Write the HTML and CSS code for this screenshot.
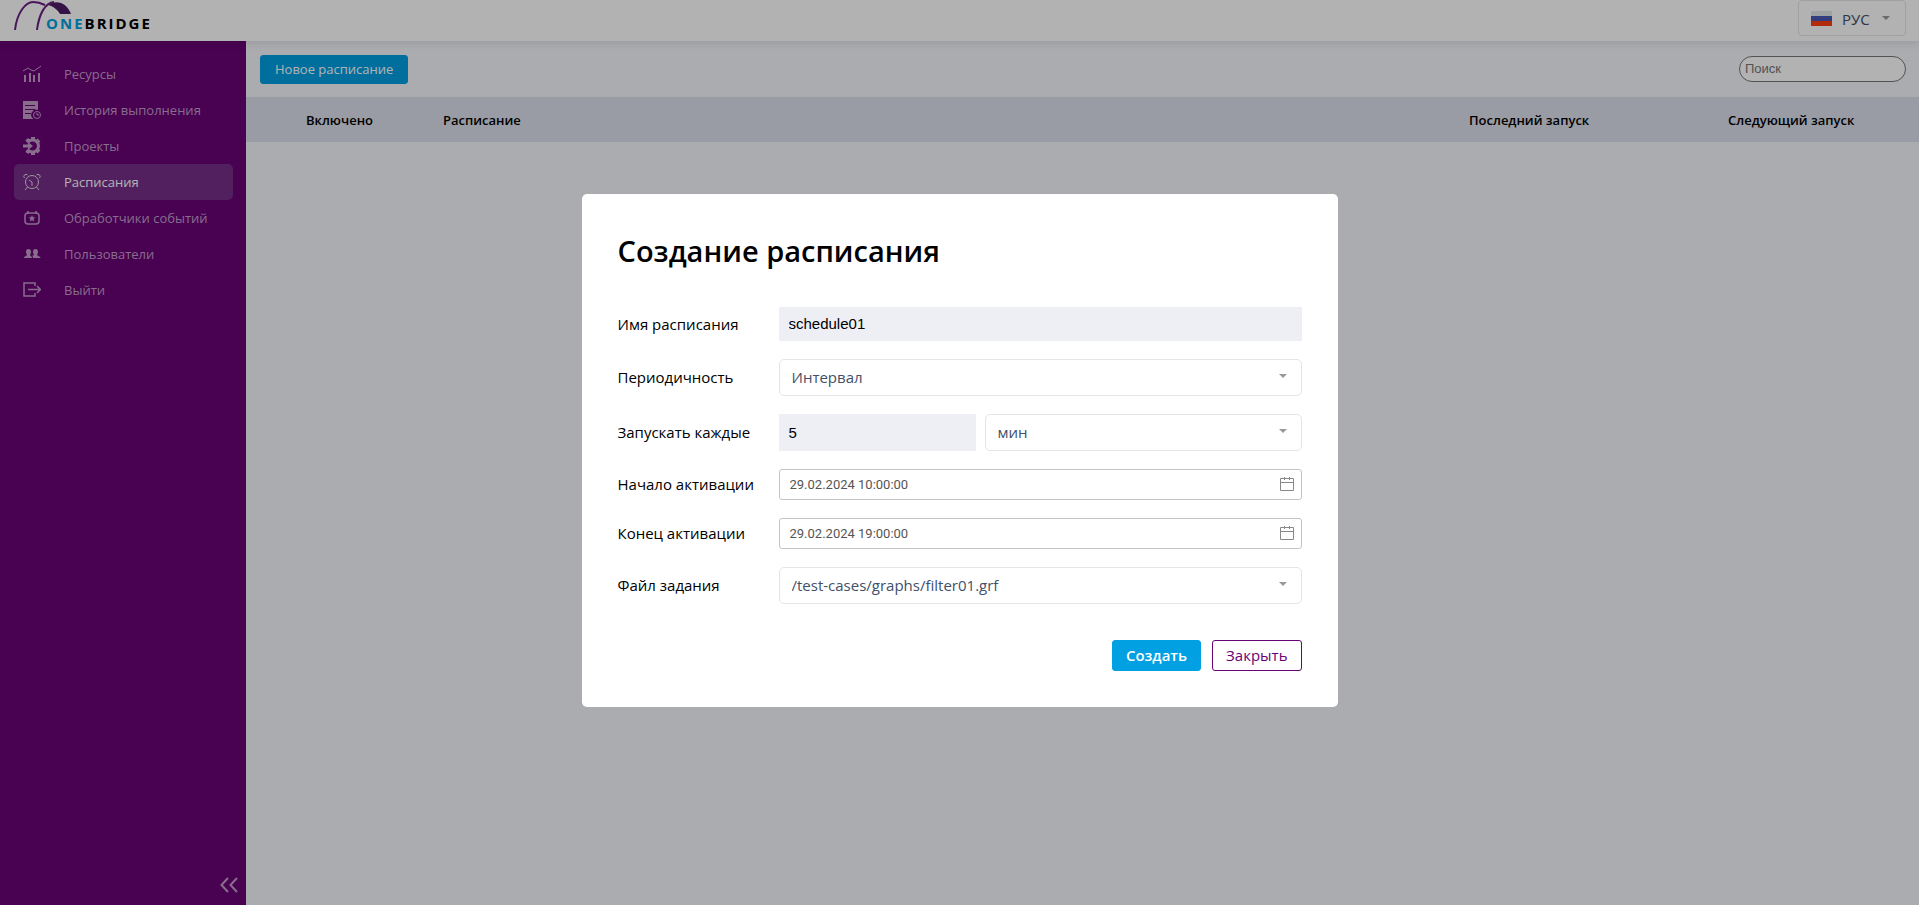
FILE: index.html
```html
<!DOCTYPE html>
<html lang="ru">
<head>
  <meta charset="utf-8">
  <title>OneBridge - Расписания</title>
  <link rel="stylesheet" href="styles.css">
</head>
<body>
  <header class="header">
    <a href="#" class="logo" aria-label="OneBridge">
      <svg width="150" height="40" viewBox="0 0 150 40">
        <path d="M1 30C3 12 12 2 19 2c5 0 8 1 12 3" fill="none" stroke="#6b2080" stroke-width="2"/>
        <path d="M23 30C25 14 31 3 40 2" fill="none" stroke="#6b2080" stroke-width="2"/>
        <path d="M34 5C43-1 53 3 57 14H46C44 10 39 6 34 5z" fill="#4f1c63"/>
        <text x="32" y="29" class="logo-text"><tspan fill="#00a0e3">ONE</tspan><tspan>BRIDGE</tspan></text>
      </svg>
    </a>
    <div class="lang">
      <svg class="flag" width="21" height="15" viewBox="0 0 21 15">
        <rect width="21" height="5" fill="#e4e8ea"/>
        <rect y="5" width="21" height="5" fill="#4a58b8"/>
        <rect y="10" width="21" height="5" fill="#ff4010"/>
      </svg>
      <select class="lang-select" aria-label="Язык">
        <option>РУС</option>
        <option>ENG</option>
      </select>
    </div>
  </header>

  <div class="page">
    <nav class="sidebar">
      <ul class="menu">
        <li><a href="#">
          <svg width="18" height="18" viewBox="0 0 18 18"><path d="M0 6l5-3 3 2 3 1 7-5" fill="none" stroke="currentColor"/><path d="M2 10v7M7 8v9M11 10v7M16 8v9" stroke="currentColor" stroke-width="2"/></svg>
          Ресурсы
        </a></li>
        <li><a href="#">
          <svg width="18" height="18" viewBox="0 0 18 18"><path fill-rule="evenodd" d="M0 0h15v9a5 5 0 0 0-5 8.500v.5H0zM2 4v1h10V4zM2 8v1h10V8zM2 12v1h6v-1z" fill="currentColor"/><circle cx="14" cy="14" r="3.500" fill="none" stroke="currentColor"/><path d="M14 12v2h2" fill="none" stroke="currentColor"/></svg>
          История выполнения
        </a></li>
        <li><a href="#">
          <svg width="18" height="18" viewBox="0 0 18 18"><path d="M5 5A6 6 0 1 1 5 13" fill="none" stroke="currentColor" stroke-width="3"/><path d="M10 0v3M10 15v3M16 3l-2 2M16 15l-2-2M4 2l2 3M4 16l2-3" stroke="currentColor" stroke-width="4"/><path d="M0 7.500h5V5l5 4-5 4v-2.500H0z" fill="currentColor"/></svg>
          Проекты
        </a></li>
        <li><a href="#" class="active">
          <svg width="18" height="18" viewBox="0 0 18 18" fill="none" stroke="currentColor"><circle cx="9" cy="9" r="6.500"/><path d="M1.500 5a2 2 0 1 1 3-3M16.500 5a2 2 0 1 0-3-3M4.500 14L2 17M13.500 14l2.500 3M6 7l3 2v4"/></svg>
          Расписания
        </a></li>
        <li><a href="#">
          <svg width="18" height="18" viewBox="0 0 18 18"><rect x="2" y="4" width="14" height="11" rx="3" fill="none" stroke="currentColor" stroke-width="1.500"/><path d="M5 2v3M13 2v3" stroke="currentColor" stroke-width="1.500"/><path d="M9 6l1 2.300 2.500.2-1.900 1.600.6 2.400L9 11.200l-2.200 1.300.6-2.400-1.900-1.600L8 8.300z" fill="currentColor"/></svg>
          Обработчики событий
        </a></li>
        <li><a href="#">
          <svg width="18" height="18" viewBox="0 0 18 18" fill="currentColor"><path d="M1 13c0-2 3-2 3-3-2-3-1-6 1.500-6S9 7 7 10c0 1 2 1 2 3z"/><path d="M10 13c0-1-.5-2-1-2.500 1 0 2 0 2-.5-2-3-1-6 1.500-6S16 7 14 10c0 1 3.500 1 3.500 3z"/></svg>
          Пользователи
        </a></li>
        <li><a href="#">
          <svg width="18" height="18" viewBox="0 0 18 18" fill="none" stroke="currentColor" stroke-width="1.500"><path d="M12 5V2H1v13h11v-3M5 8.500h12M14 5l3.500 3.500L14 12"/></svg>
          Выйти
        </a></li>
      </ul>
      <button type="button" class="collapse" aria-label="Свернуть меню">
        <svg width="18" height="16" viewBox="0 0 18 16" fill="none" stroke="currentColor" stroke-width="2"><path d="M8 1L1.500 8 8 15M17 1l-6.500 7 6.500 7"/></svg>
      </button>
    </nav>

    <main class="content">
      <div class="toolbar">
        <button type="button" class="btn btn-new">Новое расписание</button>
        <input type="search" class="search" placeholder="Поиск" aria-label="Поиск">
      </div>
      <table class="schedules">
        <thead>
          <tr>
            <td class="col-check"></td>
            <th class="col-enabled">Включено</th>
            <th>Расписание</th>
            <th class="col-last">Последний запуск</th>
            <th class="col-next">Следующий запуск</th>
          </tr>
        </thead>
      </table>
    </main>
  </div>

  <div class="overlay">
    <form class="modal" role="dialog" aria-labelledby="modalTitle">
      <h1 id="modalTitle">Создание расписания</h1>

      <div class="row">
        <label for="name">Имя расписания</label>
        <input type="text" id="name" class="field" value="schedule01">
      </div>
      <div class="row">
        <label for="period">Периодичность</label>
        <div class="select">
          <select id="period"><option>Интервал</option></select>
        </div>
      </div>
      <div class="row">
        <label for="every">Запускать каждые</label>
        <div class="interval">
          <input type="text" id="every" class="field" value="5">
          <div class="select">
            <select aria-label="Единица времени"><option>мин</option></select>
          </div>
        </div>
      </div>
      <div class="row">
        <label for="start">Начало активации</label>
        <div class="date">
          <input type="text" id="start" value="29.02.2024 10:00:00">
          <svg width="14" height="14" viewBox="0 0 14 14" fill="none" stroke="#888"><path d="M.5 1.500h13v12H.5zM.5 5.500h13M4.500 0v3M9.500 0v3"/></svg>
        </div>
      </div>
      <div class="row">
        <label for="end">Конец активации</label>
        <div class="date">
          <input type="text" id="end" value="29.02.2024 19:00:00">
          <svg width="14" height="14" viewBox="0 0 14 14" fill="none" stroke="#888"><path d="M.5 1.500h13v12H.5zM.5 5.500h13M4.500 0v3M9.500 0v3"/></svg>
        </div>
      </div>
      <div class="row">
        <label for="file">Файл задания</label>
        <div class="select">
          <select id="file"><option>/test-cases/graphs/filter01.grf</option></select>
        </div>
      </div>

      <div class="actions">
        <button type="button" class="btn btn-create">Создать</button>
        <button type="button" class="btn btn-close">Закрыть</button>
      </div>
    </form>
  </div>
</body>
</html>
```
FILE: styles.css
```css
* {
  box-sizing: border-box;
}

body {
  margin: 0;
  min-height: 100vh;
  display: flex;
  flex-direction: column;
  font-family: "Open Sans", sans-serif;
  font-size: 13px;
  color: #000;
  background-color: #f4f6fb;
}

button,
select {
  font-family: inherit;
  cursor: pointer;
}

/* Header */
.header {
  position: relative;
  display: flex;
  justify-content: space-between;
  height: 41px;
  padding: 0 13px 0 14px;
  background-color: #fff;
  box-shadow: 0 0 10px rgba(0, 0, 0, 0.15);
}

.logo svg {
  display: block;
}

.logo-text {
  font-size: 15px;
  font-weight: 700;
  letter-spacing: 2px;
}

.lang {
  position: relative;
  display: flex;
  align-items: center;
  width: 108px;
  height: 36px;
  padding-left: 12px;
  border: 1px solid #e5e5e8;
  border-radius: 4px;
}

.lang-select {
  flex: 1;
  height: 34px;
  padding: 2px 10px 0;
  border: 0;
  background: none;
  appearance: none;
  font-size: 15px;
  color: #41506b;
}

.lang::after,
.select::after {
  content: "";
  position: absolute;
  top: 15px;
  right: 15px;
  border: 4px solid transparent;
  border-top-color: #999;
  border-bottom: 0;
  pointer-events: none;
}

/* Sidebar */
.page {
  flex: 1;
  display: flex;
}

.sidebar {
  width: 246px;
  display: flex;
  flex-direction: column;
  justify-content: space-between;
  align-items: flex-end;
  padding: 15px 13px 12px 14px;
  background-color: #670375;
}

.menu {
  width: 100%;
  margin: 0;
  padding: 0;
  list-style: none;
}

.menu a {
  display: flex;
  align-items: center;
  gap: 23px;
  height: 36px;
  padding-left: 9px;
  border-radius: 5px;
  color: #c39dca;
  text-decoration: none;
}

.menu a.active {
  color: #fff;
  background-color: #762e89;
}

.menu a.active svg {
  opacity: 0.8;
}

.collapse {
  padding: 0;
  margin-right: -5px;
  border: 0;
  background: none;
  color: #c39dca;
}

.collapse svg {
  display: block;
}

/* Content */
.content {
  flex: 1;
}

.toolbar {
  display: flex;
  justify-content: space-between;
  align-items: center;
  height: 56px;
  padding: 0 13px 0 14px;
}

.btn {
  padding: 0 14px;
  border: 1px solid #00a0e3;
  border-radius: 3px;
  background-color: #00a0e3;
  color: #fff;
}

.btn-new {
  height: 29px;
  font-size: 13px;
}

.search {
  width: 167px;
  height: 26px;
  padding: 0 5px 2px;
  border: 1px solid #777;
  border-radius: 13px;
  background-color: #fff;
  font-family: "Liberation Sans", Arial, sans-serif;
  font-size: 13px;
}

.schedules {
  width: 100%;
  border-collapse: collapse;
  table-layout: fixed;
}

.schedules td,
.schedules th {
  height: 45px;
  padding: 0;
  background-color: #dce0ed;
  font-size: 13px;
  font-weight: 600;
  text-align: left;
}

.col-check {
  width: 60px;
}

.col-enabled {
  width: 137px;
}

.col-last {
  width: 259px;
}

.col-next {
  width: 191px;
}

/* Modal */
.overlay {
  position: fixed;
  inset: 0;
  display: flex;
  align-items: center;
  justify-content: center;
  padding-bottom: 5px;
  background-color: rgba(0, 0, 0, 0.3);
}

.modal {
  display: flex;
  flex-direction: column;
  gap: 18px;
  width: 756px;
  max-width: 100%;
  padding: 36px;
  border-radius: 5px;
  background-color: #fff;
}

.modal h1 {
  margin: 0 0 17px;
  font-size: 29px;
  font-weight: 600;
  line-height: 42px;
}

.row {
  display: grid;
  grid-template-columns: 161px 1fr;
  align-items: center;
  font-size: 15px;
}

.field {
  width: 100%;
  height: 34px;
  padding: 0 10px;
  border: 0;
  background-color: #eeeff5;
  font-family: "Liberation Sans", Arial, sans-serif;
  font-size: 15px;
}

.select {
  position: relative;
}

.select select {
  display: block;
  width: 100%;
  height: 37px;
  padding: 0 12px;
  border: 1px solid #e5e5e8;
  border-radius: 5px;
  background-color: #fff;
  appearance: none;
  font-size: 15px;
  color: #41506b;
}

.interval {
  display: grid;
  grid-template-columns: 197px 1fr;
  gap: 9px;
}

.interval .field {
  height: 37px;
}

.date {
  position: relative;
}

.date input {
  display: block;
  width: 100%;
  height: 31px;
  padding: 0 10px;
  border: 1px solid #c4c4c4;
  border-radius: 3px;
  font-family: Roboto, sans-serif;
  font-size: 13px;
  color: #555;
}

.date svg {
  position: absolute;
  top: 8px;
  right: 8px;
}

.actions {
  display: flex;
  justify-content: flex-end;
  gap: 11px;
  margin-top: 18px;
}

.actions .btn {
  height: 31px;
  padding: 0 13px;
  font-size: 15px;
}

.btn-create {
  font-weight: 600;
}

.actions .btn-close {
  border-color: #670375;
  background-color: #fff;
  color: #670375;
}
```
